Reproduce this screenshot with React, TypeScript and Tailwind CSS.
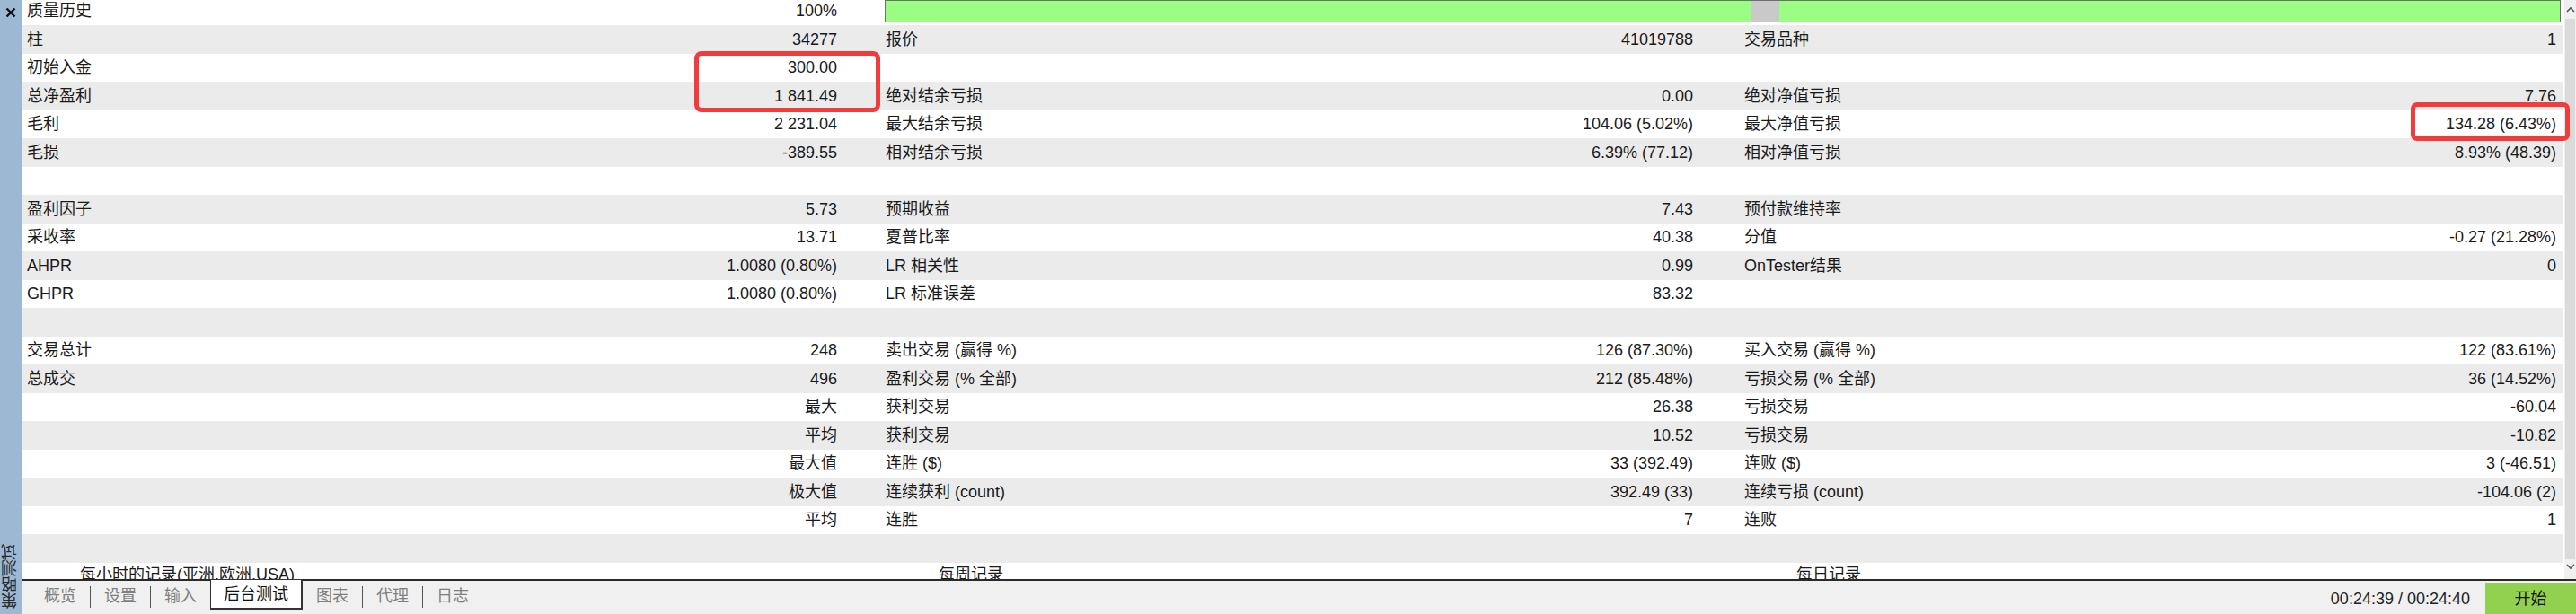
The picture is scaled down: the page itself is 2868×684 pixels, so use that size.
import React from 'react';

type Cell = [string, string];
type Row = { cells?: [Cell, Cell, Cell]; kind?: 'progress' | 'empty' | 'section' };

const rows: Row[] = [
  { kind: 'progress', cells: [['质量历史', '100%'], ['', ''], ['', '']] },
  { cells: [['柱', '34277'], ['报价', '41019788'], ['交易品种', '1']] },
  { cells: [['初始入金', '300.00'], ['', ''], ['', '']] },
  { cells: [['总净盈利', '1 841.49'], ['绝对结余亏损', '0.00'], ['绝对净值亏损', '7.76']] },
  { cells: [['毛利', '2 231.04'], ['最大结余亏损', '104.06 (5.02%)'], ['最大净值亏损', '134.28 (6.43%)']] },
  { cells: [['毛损', '-389.55'], ['相对结余亏损', '6.39% (77.12)'], ['相对净值亏损', '8.93% (48.39)']] },
  { kind: 'empty' },
  { cells: [['盈利因子', '5.73'], ['预期收益', '7.43'], ['预付款维持率', '']] },
  { cells: [['采收率', '13.71'], ['夏普比率', '40.38'], ['分值', '-0.27 (21.28%)']] },
  { cells: [['AHPR', '1.0080 (0.80%)'], ['LR 相关性', '0.99'], ['OnTester结果', '0']] },
  { cells: [['GHPR', '1.0080 (0.80%)'], ['LR 标准误差', '83.32'], ['', '']] },
  { kind: 'empty' },
  { cells: [['交易总计', '248'], ['卖出交易 (赢得 %)', '126 (87.30%)'], ['买入交易 (赢得 %)', '122 (83.61%)']] },
  { cells: [['总成交', '496'], ['盈利交易 (% 全部)', '212 (85.48%)'], ['亏损交易 (% 全部)', '36 (14.52%)']] },
  { cells: [['', '最大'], ['获利交易', '26.38'], ['亏损交易', '-60.04']] },
  { cells: [['', '平均'], ['获利交易', '10.52'], ['亏损交易', '-10.82']] },
  { cells: [['', '最大值'], ['连胜 ($)', '33 (392.49)'], ['连败 ($)', '3 (-46.51)']] },
  { cells: [['', '极大值'], ['连续获利 (count)', '392.49 (33)'], ['连续亏损 (count)', '-104.06 (2)']] },
  { cells: [['', '平均'], ['连胜', '7'], ['连败', '1']] },
  { kind: 'empty' },
  { kind: 'section' },
];

const padRight = ['pr-[48px]', 'pr-[51px]', 'pr-[8px]'];

function StatCell({ cell, col }: { cell: Cell; col: number }) {
  return (
    <div className={`flex items-center justify-between pl-[6px] ${padRight[col]}`}>
      <span>{cell[0]}</span>
      <span>{cell[1]}</span>
    </div>
  );
}

function StatRow({ row, index }: { row: Row; index: number }) {
  const bg = index % 2 === 1 ? 'bg-[#ebebeb]' : 'bg-white';

  if (row.kind === 'empty') {
    return <div className={`h-[31.5px] ${bg}`} />;
  }

  if (row.kind === 'section') {
    return (
      <div className={`h-[31.5px] ${bg} grid grid-cols-[956px_956px_918px] items-start pt-[1px]`}>
        <span className="pl-[65px]">每小时的记录(亚洲,欧洲,USA)</span>
        <span className="pl-[65px]">每周记录</span>
        <span className="pl-[64px]">每日记录</span>
      </div>
    );
  }

  const cells = row.cells!;

  if (row.kind === 'progress') {
    return (
      <div className={`h-[31.5px] ${bg} grid grid-cols-[956px_1874px]`}>
        <StatCell cell={cells[0]} col={0} />
        <div className="pl-[5px] pr-[3px] pt-[3.5px]">
          <div className="flex h-[25px] border border-[#6e6e6e] bg-[#9afe83]">
            <div className="w-[964px]" />
            <div className="w-[31px] bg-[#c9c9c9]" />
            <div className="flex-1" />
          </div>
        </div>
      </div>
    );
  }

  return (
    <div className={`h-[31.5px] ${bg} grid grid-cols-[956px_956px_918px]`}>
      {cells.map((c, i) => (
        <StatCell key={i} cell={c} col={i} />
      ))}
    </div>
  );
}

const tabs = ['概览', '设置', '输入', '后台测试', '图表', '代理', '日志'];

export default function App() {
  return (
    <div
      className="flex w-[2868px] h-[684px] overflow-hidden bg-white text-[18px] leading-[24px] text-[#1a1a1a]"
      style={{ fontFamily: '"Liberation Sans", "Noto Sans CJK SC", sans-serif' }}
    >
      {/* Side strip */}
      <div className="w-[24px] shrink-0 bg-[#9db8d3] flex flex-col justify-between items-center">
        <svg width="12" height="12" viewBox="0 0 12 12" className="mt-[8px]">
          <path d="M1.5 1.5 L10.5 10.5 M10.5 1.5 L1.5 10.5" stroke="#111" strokeWidth="2.4" />
        </svg>
        <span className="[writing-mode:vertical-rl] rotate-180 mb-[6px] text-[#2a2a2a] leading-[20px]">策略测试</span>
      </div>

      <div className="flex-1 flex flex-col min-w-0">
        {/* Report table + scrollbar */}
        <div className="relative flex h-[645px] overflow-hidden">
          <div className="w-[2830px] -mt-[3.5px]">
            {rows.map((r, i) => (
              <StatRow key={i} row={r} index={i} />
            ))}
          </div>
          <div className="w-[1px]" />
          <div className="w-[13px] bg-[#f0f0f0] flex flex-col items-center">
            <svg width="10" height="8" viewBox="0 0 10 8" className="mt-[7px]">
              <path d="M1 6 L5 2 L9 6" stroke="#555" strokeWidth="1.6" fill="none" />
            </svg>
            <div className="mt-[6px] w-[11px] flex-1 bg-[#dadada]" />
            <svg width="10" height="8" viewBox="0 0 10 8" className="mb-[10px] mt-[4px]">
              <path d="M1 2 L5 6 L9 2" stroke="#555" strokeWidth="1.6" fill="none" />
            </svg>
          </div>

          {/* highlight boxes */}
          <div className="absolute left-[749px] top-[57px] w-[207px] h-[68px] border-[5px] border-[#f23b3b] rounded-[8px]" />
          <div className="absolute left-[2660px] top-[114px] w-[177px] h-[43px] border-[5px] border-[#f23b3b] rounded-[7px]" />
        </div>

        {/* Tab bar */}
        <div className="h-[39px] border-t-2 border-[#2a2a2a] bg-[#f0f0f0] flex items-start justify-between">
          <div className="flex items-start pl-[10px]">
            {tabs.map((t, i) => {
              const active = t === '后台测试';
              const sep = i > 0 && !active && tabs[i - 1] !== '后台测试';
              return (
                <React.Fragment key={t}>
                  {sep && <div className="w-[1px] h-[24px] mt-[6px] bg-[#555]" />}
                  {active ? (
                    <div className="-mt-[2px] h-[34px] px-[14px] bg-white border border-[#333] border-r-2 border-b-2 flex items-center text-[#111]">
                      {t}
                    </div>
                  ) : (
                    <div className="px-[15px] h-[34px] flex items-center text-[#7f7f7f]">{t}</div>
                  )}
                </React.Fragment>
              );
            })}
          </div>
          <div className="flex items-end self-stretch">
            <span className="mb-[5px] mr-[17px] text-[#222]">00:24:39 / 00:24:40</span>
            <div className="w-[101px] h-[35px] bg-[#92d050] flex items-center justify-center text-[#111]">开始</div>
          </div>
        </div>
      </div>
    </div>
  );
}
